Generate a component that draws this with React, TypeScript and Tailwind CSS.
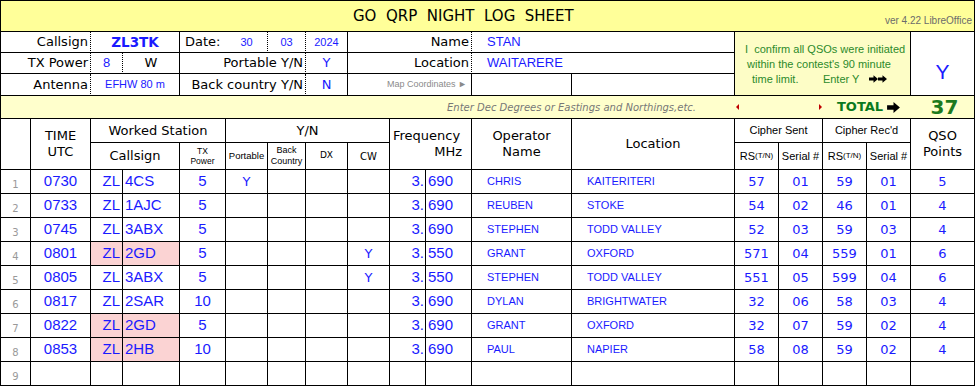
const COLS =
  'grid grid-cols-[30px_60px_32px_57px_46px_42px_38px_42px_42px_36px_46px_100px_163px_44px_44px_44px_44px_64px]';
const DV = "font-['DejaVu_Sans',Verdana,sans-serif]";
const LS = "font-['Liberation_Sans',Arial,sans-serif]";
const B = 'border-r border-b border-black';
const BD = 'border-r border-b border-black [border-right-style:dotted]';
const BLUE = 'text-[#1a1aff]';

type Qso = {
  n: number;
  time?: string;
  call?: string;
  pwr?: string;
  port?: string;
  cw?: string;
  freq?: string;
  op?: string;
  loc?: string;
  rs?: string;
  ss?: string;
  rr?: string;
  sr?: string;
  pts?: string;
  pink?: boolean;
};

const qsos: Qso[] = [
  { n: 1, time: '0730', call: '4CS', pwr: '5', port: 'Y', freq: '690', op: 'CHRIS', loc: 'KAITERITERI', rs: '57', ss: '01', rr: '59', sr: '01', pts: '5' },
  { n: 2, time: '0733', call: '1AJC', pwr: '5', freq: '690', op: 'REUBEN', loc: 'STOKE', rs: '54', ss: '02', rr: '46', sr: '01', pts: '4' },
  { n: 3, time: '0745', call: '3ABX', pwr: '5', freq: '690', op: 'STEPHEN', loc: 'TODD VALLEY', rs: '52', ss: '03', rr: '59', sr: '03', pts: '4' },
  { n: 4, time: '0801', call: '2GD', pwr: '5', cw: 'Y', freq: '550', op: 'GRANT', loc: 'OXFORD', rs: '571', ss: '04', rr: '559', sr: '01', pts: '6', pink: true },
  { n: 5, time: '0805', call: '3ABX', pwr: '5', cw: 'Y', freq: '550', op: 'STEPHEN', loc: 'TODD VALLEY', rs: '551', ss: '05', rr: '599', sr: '04', pts: '6' },
  { n: 6, time: '0817', call: '2SAR', pwr: '10', freq: '690', op: 'DYLAN', loc: 'BRIGHTWATER', rs: '32', ss: '06', rr: '58', sr: '03', pts: '4' },
  { n: 7, time: '0822', call: '2GD', pwr: '5', freq: '690', op: 'GRANT', loc: 'OXFORD', rs: '32', ss: '07', rr: '59', sr: '02', pts: '4', pink: true },
  { n: 8, time: '0853', call: '2HB', pwr: '10', freq: '690', op: 'PAUL', loc: 'NAPIER', rs: '58', ss: '08', rr: '59', sr: '02', pts: '4', pink: true },
  { n: 9 },
];

// chunky wingdings-style arrow
function BlockArrow({ w, h }: { w: number; h: number }) {
  return (
    <svg width={w} height={h} viewBox="0 0 14 12" className="inline-block">
      <path d="M0 3.5H7V0L14 6L7 12V8.5H0Z" fill="#000" />
    </svg>
  );
}

function TopSection() {
  return (
    <div className={`${COLS} grid-rows-[31px_21px_21px_22px_23px]`}>
      {/* title */}
      <div className={`col-span-full row-start-1 ${B} bg-[#ffff99] flex items-center`}>
        <span className={`pl-[352px] whitespace-pre text-[15px] text-black ${DV}`}>GO  QRP  NIGHT  LOG  SHEET</span>
        <span className={`ml-auto pr-[2px] pt-[8px] text-[10px] text-[#6b6b6b] ${LS}`}>ver 4.22 LibreOffice</span>
      </div>

      {/* row: callsign / date / name */}
      <div className={`col-start-1 col-span-2 row-start-2 ${BD} flex items-center justify-end pr-[2px] text-[13px] ${DV}`}>Callsign</div>
      <div className={`col-start-3 col-span-2 row-start-2 ${B} flex items-center justify-center text-[13.5px] font-bold ${DV} ${BLUE}`}>ZL3TK</div>
      <div className={`col-start-5 row-start-2 border-b border-black flex items-center pl-[5px] text-[13px] ${DV}`}>Date:</div>
      <div className={`col-start-6 row-start-2 ${BD} flex items-center justify-center text-[11px] ${LS} ${BLUE}`}>30</div>
      <div className={`col-start-7 row-start-2 ${BD} flex items-center justify-center text-[11px] ${LS} ${BLUE}`}>03</div>
      <div className={`col-start-8 row-start-2 ${B} flex items-center justify-center text-[11px] ${LS} ${BLUE}`}>2024</div>
      <div className={`col-start-9 col-span-3 row-start-2 ${BD} flex items-center justify-end pr-[2px] text-[13px] ${DV}`}>Name</div>
      <div className={`col-start-12 col-span-2 row-start-2 ${B} flex items-center pl-[15px] text-[13px] ${LS} ${BLUE}`}>STAN</div>

      {/* confirm box */}
      <div className={`col-start-14 col-span-4 row-start-2 row-span-3 ${B} bg-[#fdfdc6] flex flex-col justify-center pt-[1px] text-[11px] leading-[15px] text-[#2b8a2b] ${LS}`}>
        <span className="pl-[10px] whitespace-pre">I  confirm all QSOs were initiated</span>
        <span className="pl-[12px]">within the contest's 90 minute</span>
        <span className="pl-[17px] whitespace-pre flex items-center">
          time limit.        Enter Y
          <span className="ml-[10px] flex items-center">
            <BlockArrow w={9} h={8} />
            <BlockArrow w={9} h={8} />
          </span>
        </span>
      </div>
      <div className={`col-start-18 row-start-2 row-span-3 ${B} flex items-center justify-center pt-[17px] text-[21px] ${LS} ${BLUE}`}>Y</div>

      {/* row: tx power / portable / location */}
      <div className={`col-start-1 col-span-2 row-start-3 ${BD} flex items-center justify-end pr-[2px] text-[13px] ${DV}`}>TX Power</div>
      <div className={`col-start-3 row-start-3 ${BD} flex items-center justify-center text-[13px] ${LS} ${BLUE}`}>8</div>
      <div className={`col-start-4 row-start-3 ${B} flex items-center justify-center text-[13px] ${DV}`}>W</div>
      <div className={`col-start-5 col-span-3 row-start-3 ${BD} flex items-center justify-end pr-[2px] text-[13px] ${DV}`}>Portable Y/N</div>
      <div className={`col-start-8 row-start-3 ${B} flex items-center justify-center text-[13px] ${DV} ${BLUE}`}>Y</div>
      <div className={`col-start-9 col-span-3 row-start-3 ${BD} flex items-center justify-end pr-[2px] text-[13px] ${DV}`}>Location</div>
      <div className={`col-start-12 col-span-2 row-start-3 ${B} flex items-center pl-[15px] text-[13px] ${LS} ${BLUE}`}>WAITARERE</div>

      {/* row: antenna / back country / map coordinates */}
      <div className={`col-start-1 col-span-2 row-start-4 ${BD} flex items-center justify-end pr-[2px] text-[13px] ${DV}`}>Antenna</div>
      <div className={`col-start-3 col-span-2 row-start-4 ${B} flex items-center justify-center text-[11px] ${LS} ${BLUE}`}>EFHW 80 m</div>
      <div className={`col-start-5 col-span-3 row-start-4 ${BD} flex items-center justify-end pr-[2px] text-[13px] ${DV}`}>Back country Y/N</div>
      <div className={`col-start-8 row-start-4 ${B} flex items-center justify-center text-[13px] ${DV} ${BLUE}`}>N</div>
      <div className={`col-start-9 col-span-3 row-start-4 ${B} flex items-center justify-end pr-[4px] text-[9px] text-[#8a8a8a] ${LS}`}>Map Coordinates ►</div>
      <div className={`col-start-12 row-start-4 ${B}`} />
      <div className={`col-start-13 row-start-4 ${B}`} />

      {/* hint / total band */}
      <div className={`col-span-full row-start-5 ${B} bg-[#ffffcc] flex items-center`}>
        <div className={`w-[734px] flex justify-end pr-[39px] text-[10px] italic text-[#777] ${DV}`}>
          Enter Dec Degrees or Eastings and Northings,etc.
        </div>
        <div className="w-[176px] flex items-center">
          <span className="ml-[1px] w-0 h-0 border-y-[3px] border-y-transparent border-r-[3px] border-r-[#c00000]" />
          <span className="ml-[80px] w-0 h-0 border-y-[3px] border-y-transparent border-l-[3px] border-l-[#c00000]" />
          <span className={`ml-[15px] text-[13px] font-bold text-[#0a7a1e] ${DV}`}>TOTAL</span>
          <span className="ml-[4px] flex items-center">
            <BlockArrow w={13} h={11} />
          </span>
        </div>
        <div className={`flex-1 flex justify-center pl-[4px] text-[20px] font-bold text-[#1d7a1d] ${DV}`}>37</div>
      </div>
    </div>
  );
}

function TableHeader() {
  const c = 'flex items-center justify-center text-center';
  return (
    <div className={`${COLS} grid-rows-[24px_27px]`}>
      <div className={`col-start-1 row-start-1 row-span-2 ${B}`} />
      <div className={`col-start-2 row-start-1 row-span-2 ${B} ${c} text-[13px] leading-[16px] ${DV}`}>
        TIME<br />UTC
      </div>
      <div className={`col-start-3 col-span-3 row-start-1 ${B} ${c} text-[13px] ${DV}`}>Worked Station</div>
      <div className={`col-start-6 col-span-4 row-start-1 ${B} ${c} text-[13px] ${DV}`}>Y/N</div>
      <div className={`col-start-10 col-span-2 row-start-1 row-span-2 ${B} flex flex-col justify-center text-[13px] leading-[16px] ${DV}`}>
        <span className="pl-[3px]">Frequency</span>
        <span className="text-right pr-[9px]">MHz</span>
      </div>
      <div className={`col-start-12 row-start-1 row-span-2 ${B} ${c} text-[13px] leading-[16px] ${DV}`}>
        Operator<br />Name
      </div>
      <div className={`col-start-13 row-start-1 row-span-2 ${B} ${c} text-[13px] ${DV}`}>Location</div>
      <div className={`col-start-14 col-span-2 row-start-1 ${B} ${c} text-[11px] ${LS}`}>Cipher Sent</div>
      <div className={`col-start-16 col-span-2 row-start-1 ${B} ${c} text-[11px] ${LS}`}>Cipher Rec'd</div>
      <div className={`col-start-18 row-start-1 row-span-2 ${B} ${c} text-[13px] leading-[16px] ${DV}`}>
        QSO<br />Points
      </div>

      <div className={`col-start-3 col-span-2 row-start-2 ${B} ${c} text-[13px] ${DV}`}>Callsign</div>
      <div className={`col-start-5 row-start-2 ${B} ${c} text-[8.5px] leading-[10px] ${LS}`}>
        TX<br />Power
      </div>
      <div className={`col-start-6 row-start-2 ${B} ${c} text-[9.5px] ${LS}`}>Portable</div>
      <div className={`col-start-7 row-start-2 ${B} ${c} text-[9px] leading-[11px] ${LS}`}>
        Back<br />Country
      </div>
      <div className={`col-start-8 row-start-2 ${B} ${c} text-[9px] ${DV}`}>DX</div>
      <div className={`col-start-9 row-start-2 ${B} ${c} text-[10px] ${DV}`}>CW</div>
      <div className={`col-start-14 row-start-2 ${B} ${c} text-[11px] ${LS}`}>
        RS<span className="text-[8px]">(T/N)</span>
      </div>
      <div className={`col-start-15 row-start-2 ${B} ${c} text-[11px] ${LS}`}>Serial #</div>
      <div className={`col-start-16 row-start-2 ${B} ${c} text-[11px] ${LS}`}>
        RS<span className="text-[8px]">(T/N)</span>
      </div>
      <div className={`col-start-17 row-start-2 ${B} ${c} text-[11px] ${LS}`}>Serial #</div>
    </div>
  );
}

function QsoRow({ q }: { q: Qso }) {
  const mid = `${B} flex items-center justify-center`;
  const big = `text-[15px] ${LS} ${BLUE}`;
  const num = `text-[13px] ${DV} ${BLUE}`;
  const pink = q.pink ? 'bg-[#fbd3d3]' : '';
  const empty = !q.time;
  return (
    <div className={`${COLS} h-[24px]`}>
      <div className={`${B} flex items-end justify-center pb-[1px] text-[10px] text-[#999] ${DV}`}>{q.n}</div>
      <div className={`${mid} ${big}`}>{q.time}</div>
      <div className={`${B} ${pink} flex items-center justify-end pr-[2px] ${big}`}>{empty ? '' : 'ZL'}</div>
      <div className={`${B} ${pink} flex items-center pl-[2px] ${big}`}>{q.call}</div>
      <div className={`${mid} ${big}`}>{q.pwr}</div>
      <div className={`${mid} text-[13px] ${DV} ${BLUE}`}>{q.port}</div>
      <div className={mid} />
      <div className={mid} />
      <div className={`${mid} text-[13px] ${DV} ${BLUE}`}>{q.cw}</div>
      <div className={`${B} flex items-center justify-end pr-[1px] ${big}`}>{empty ? '' : '3.'}</div>
      <div className={`${B} flex items-center pl-[2px] ${big}`}>{q.freq}</div>
      <div className={`${B} flex items-center pl-[15px] text-[11px] ${LS} ${BLUE}`}>{q.op}</div>
      <div className={`${B} flex items-center pl-[15px] text-[11px] ${LS} ${BLUE}`}>{q.loc}</div>
      <div className={`${mid} ${num}`}>{q.rs}</div>
      <div className={`${mid} ${num}`}>{q.ss}</div>
      <div className={`${mid} ${num}`}>{q.rr}</div>
      <div className={`${mid} ${num}`}>{q.sr}</div>
      <div className={`${mid} ${num}`}>{q.pts}</div>
    </div>
  );
}

export default function App() {
  return (
    <div className="w-[975px] h-[386px] bg-white overflow-hidden text-black">
      <div className="w-[975px] border-l border-t border-black">
        <TopSection />
        <TableHeader />
        {qsos.map(q => (
          <QsoRow key={q.n} q={q} />
        ))}
      </div>
    </div>
  );
}
